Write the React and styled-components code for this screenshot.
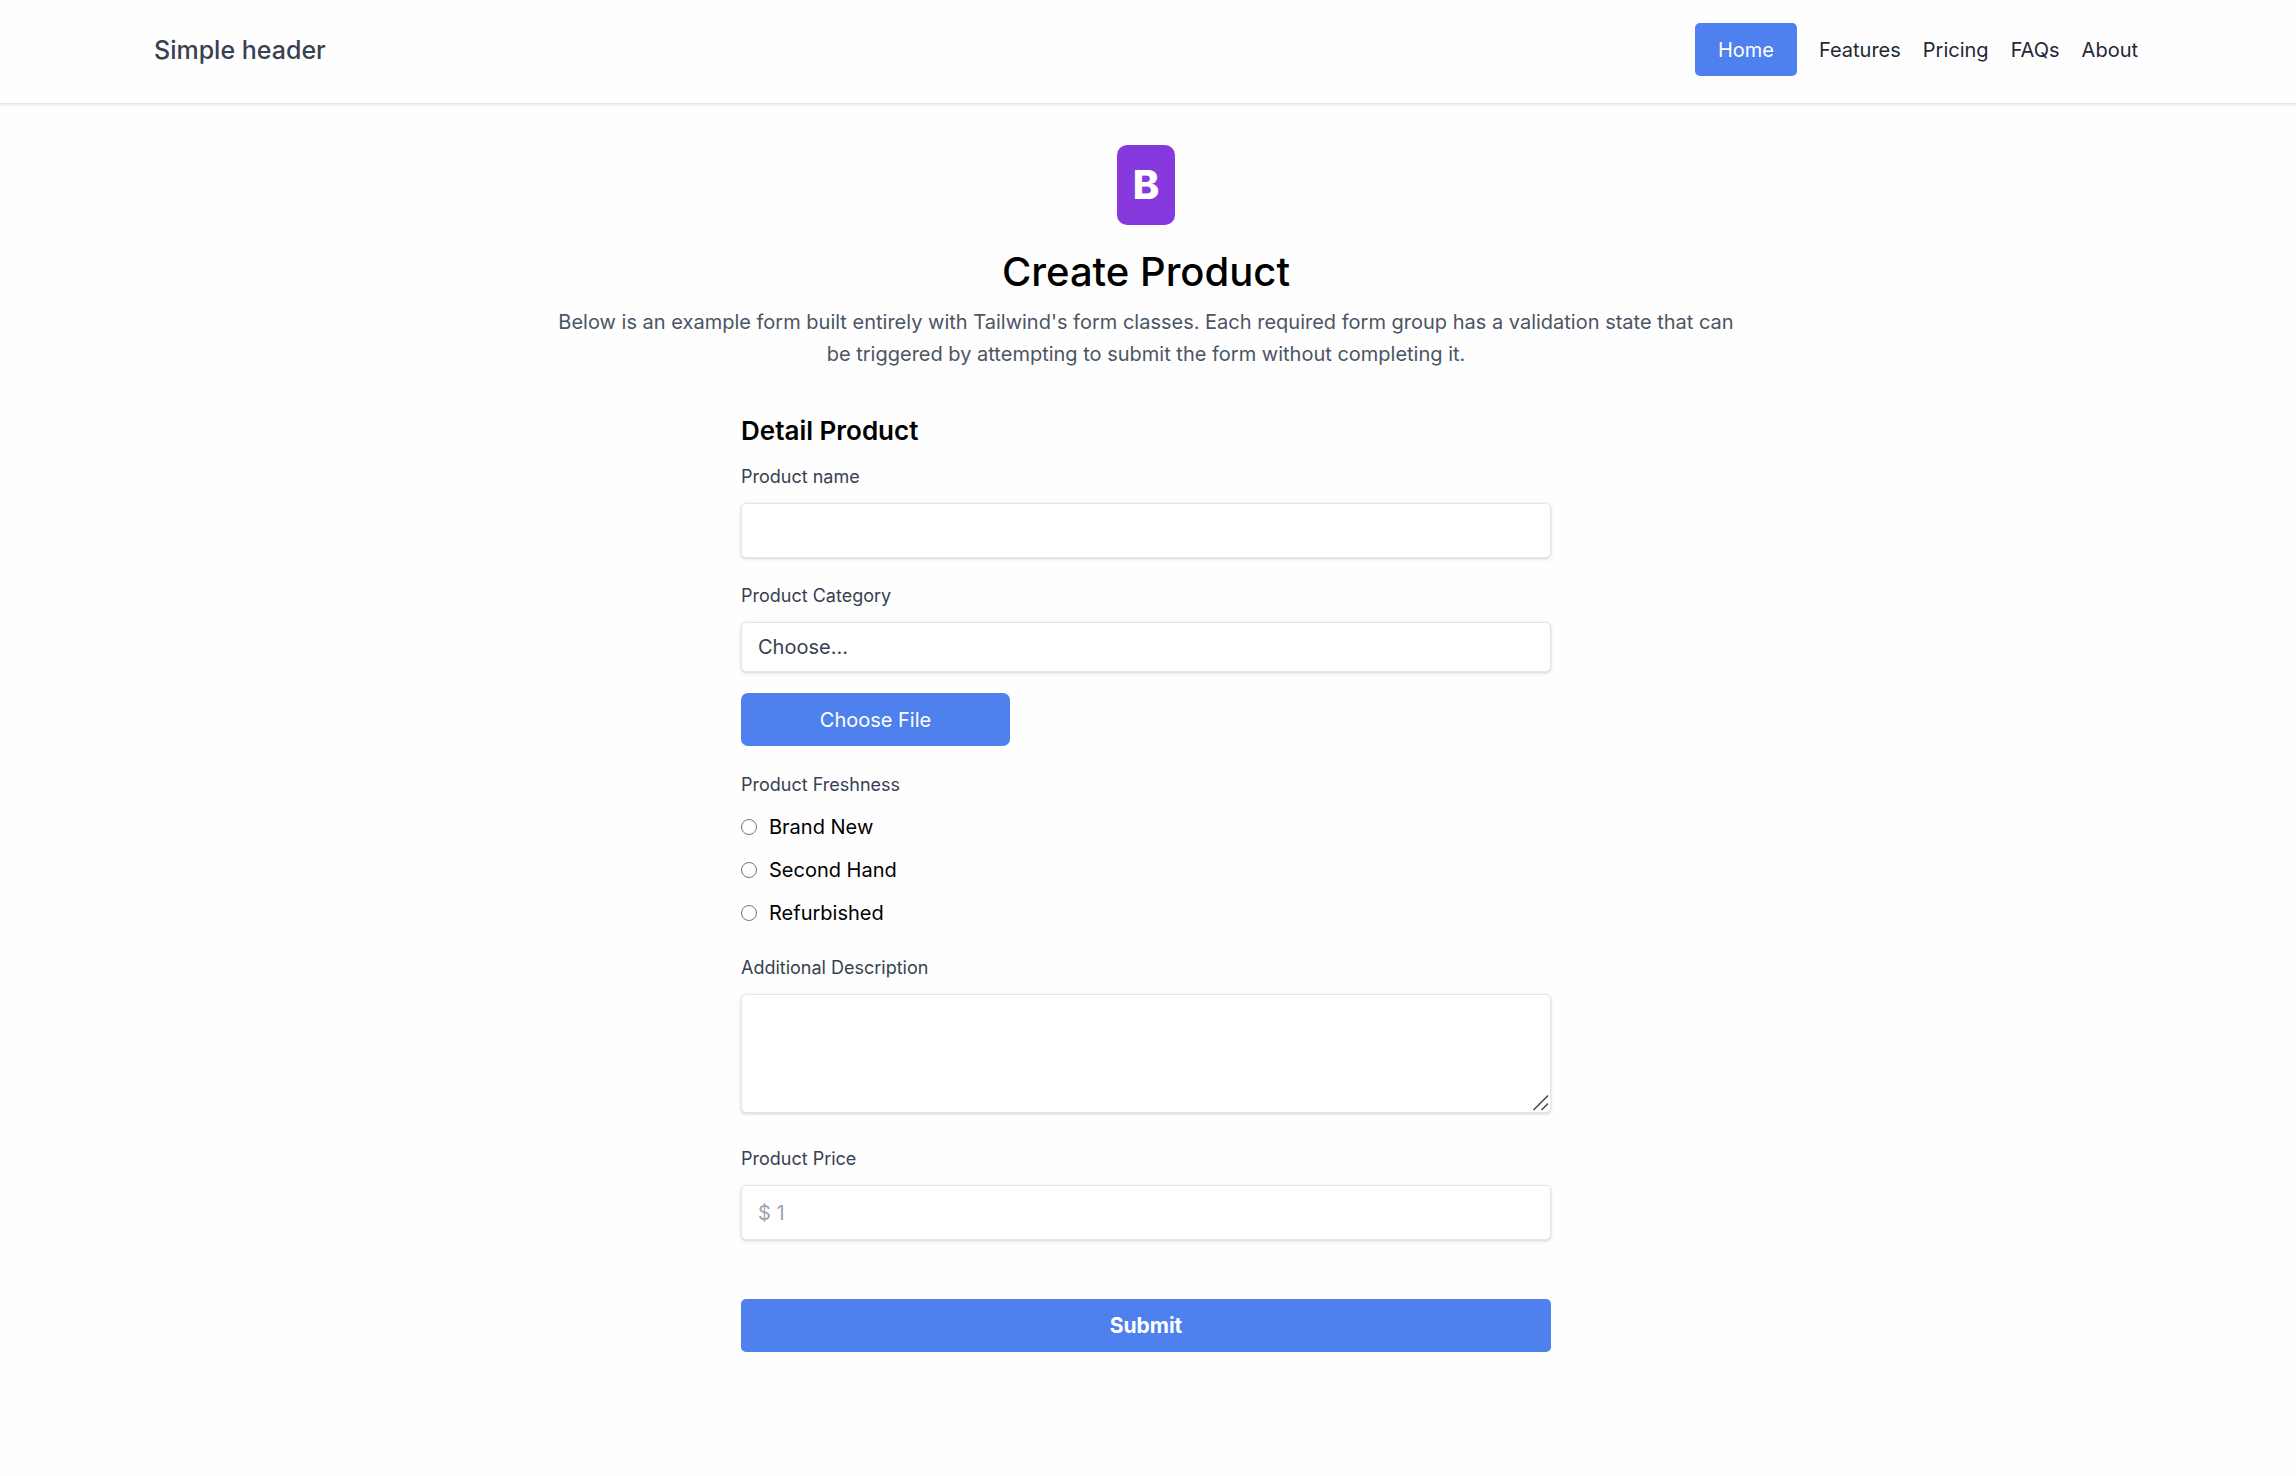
import React from "react";
import styled, { createGlobalStyle } from "styled-components";

const GlobalStyle = createGlobalStyle`
  *, *::before, *::after { box-sizing: border-box; }
  body {
    margin: 0;
    background: #fefefe;
    color: #000;
    font-family: Inter, "Liberation Sans", sans-serif;
    font-size: 20px;
    line-height: 32px;
  }
  input, select, textarea, button { font: inherit; }
`;

const blue = "#4e81ee";

const Header = styled.header`
  display: flex;
  align-items: center;
  justify-content: space-between;
  padding: 23px 158px 27px 154px;
  background: #fefefe;
  border-bottom: 1px solid #e2e3e5;
  box-shadow: 0 1px 3px rgba(0, 0, 0, 0.1);
`;

const Brand = styled.a`
  color: #374151;
  font-size: 25px;
  font-weight: 500;
  text-decoration: none;
`;

const Nav = styled.nav`
  display: flex;
  align-items: center;
  gap: 22px;
`;

const NavLink = styled.a`
  display: flex;
  align-items: center;
  height: 53px;
  padding: ${(p) => (p.$active ? "0 23px" : "0")};
  border-radius: 5px;
  background: ${(p) => (p.$active ? blue : "transparent")};
  color: ${(p) => (p.$active ? "#fff" : "#1f2937")};
  text-decoration: none;
`;

const Main = styled.main`
  display: flex;
  flex-direction: column;
  align-items: center;
  padding: 41px 4px 96px 0;
`;

const Logo = styled.div`
  display: grid;
  place-items: center;
  width: 58px;
  height: 80px;
  border-radius: 10px;
  background: #8639dd;
  color: #fff;
  font-size: 40px;
  font-weight: 800;
`;

const Title = styled.h1`
  margin: 20px 0 8px;
  font-size: 40px;
  font-weight: 500;
  line-height: 53px;
`;

const Intro = styled.p`
  max-width: 1190px;
  margin: 0;
  color: #4b5563;
  text-align: center;
`;

const Form = styled.form`
  display: flex;
  flex-direction: column;
  width: 100%;
  max-width: 810px;
  margin-top: 43px;
`;

const SectionTitle = styled.h2`
  margin: 0 0 15px;
  font-size: 26px;
  font-weight: 600;
  line-height: 36px;
`;

const Field = styled.div`
  display: flex;
  flex-direction: column;
  gap: 13px;
  margin-bottom: ${(p) => p.$after}px;
`;

const Label = styled.label`
  color: #374151;
  font-size: 18px;
  line-height: 26px;
`;

const controlStyle = `
  width: 100%;
  padding: 0 16px;
  border: 1px solid #e4e5e7;
  border-radius: 5px;
  background: #fff;
  color: #374151;
  box-shadow: 0 1px 4px rgba(0, 0, 0, 0.1), 0 1px 2px rgba(0, 0, 0, 0.08);
  outline: none;
  &:focus { border-color: ${blue}; }
`;

const Input = styled.input`
  ${controlStyle}
  height: 55px;
  &::placeholder { color: #9ca3af; opacity: 1; }
`;

const Select = styled.select`
  ${controlStyle}
  height: 50px;
  appearance: none;
`;

const TextareaFrame = styled.div`
  position: relative;
  display: flex;
`;

const Textarea = styled.textarea`
  ${controlStyle}
  height: 119px;
  padding: 10px 16px;
  resize: vertical;
  &::-webkit-resizer { display: none; }
`;

const Grip = styled.svg`
  position: absolute;
  right: 2px;
  bottom: 2px;
  pointer-events: none;
`;

const FileButton = styled.label`
  display: flex;
  align-items: center;
  justify-content: center;
  position: relative;
  width: 269px;
  height: 53px;
  margin-bottom: 26px;
  border-radius: 7px;
  background: ${blue};
  color: #fff;
  cursor: pointer;
`;

const FileInput = styled.input`
  position: absolute;
  inset: 0;
  width: 100%;
  opacity: 0;
  cursor: pointer;
`;

const Fieldset = styled.fieldset`
  display: flex;
  flex-direction: column;
  gap: 11px;
  margin: 0 0 26px;
  padding: 0;
  border: 0;
`;

const Legend = styled.legend`
  margin-bottom: 13px;
  padding: 0;
  color: #374151;
  font-size: 18px;
  line-height: 26px;
`;

const RadioLabel = styled.label`
  display: flex;
  align-items: center;
  gap: 12px;
`;

const Radio = styled.input`
  appearance: none;
  width: 16px;
  height: 16px;
  margin: 0;
  border: 1px solid #767676;
  border-radius: 50%;
  background: #fff;
  &:checked { border: 5px solid ${blue}; }
`;

const Submit = styled.button`
  height: 53px;
  padding: 0;
  border: 0;
  border-radius: 5px;
  background: ${blue};
  color: #fff;
  font-size: 21px;
  font-weight: 700;
  cursor: pointer;
`;

const links = ["Home", "Features", "Pricing", "FAQs", "About"];
const conditions = ["Brand New", "Second Hand", "Refurbished"];

export default function App() {
  return (
    <>
      <GlobalStyle />
      <Header>
        <Brand href="#">Simple header</Brand>
        <Nav>
          {links.map((text, i) => (
            <NavLink key={text} href="#" $active={i === 0}>
              {text}
            </NavLink>
          ))}
        </Nav>
      </Header>
      <Main>
        <Logo>B</Logo>
        <Title>Create Product</Title>
        <Intro>
          Below is an example form built entirely with Tailwind's form classes. Each required form
          group has a validation state that can be triggered by attempting to submit the form
          without completing it.
        </Intro>
        <Form onSubmit={(e) => e.preventDefault()}>
          <SectionTitle>Detail Product</SectionTitle>
          <Field $after={25}>
            <Label htmlFor="name">Product name</Label>
            <Input id="name" type="text" />
          </Field>
          <Field $after={21}>
            <Label htmlFor="category">Product Category</Label>
            <Select id="category">
              <option>Choose...</option>
            </Select>
          </Field>
          <FileButton>
            Choose File
            <FileInput type="file" />
          </FileButton>
          <Fieldset>
            <Legend>Product Freshness</Legend>
            {conditions.map((text) => (
              <RadioLabel key={text}>
                <Radio type="radio" name="freshness" value={text} />
                {text}
              </RadioLabel>
            ))}
          </Fieldset>
          <Field $after={33}>
            <Label htmlFor="description">Additional Description</Label>
            <TextareaFrame>
              <Textarea id="description" />
              <Grip width="17" height="17" viewBox="0 0 17 17" aria-hidden="true">
                <path d="M1.5 16 16 1.5M9.5 16l6.5-6.5" fill="none" stroke="#4d4d4f" strokeWidth="1.6" />
              </Grip>
            </TextareaFrame>
          </Field>
          <Field $after={59}>
            <Label htmlFor="price">Product Price</Label>
            <Input id="price" type="text" placeholder="$ 1" />
          </Field>
          <Submit type="submit">Submit</Submit>
        </Form>
      </Main>
    </>
  );
}
